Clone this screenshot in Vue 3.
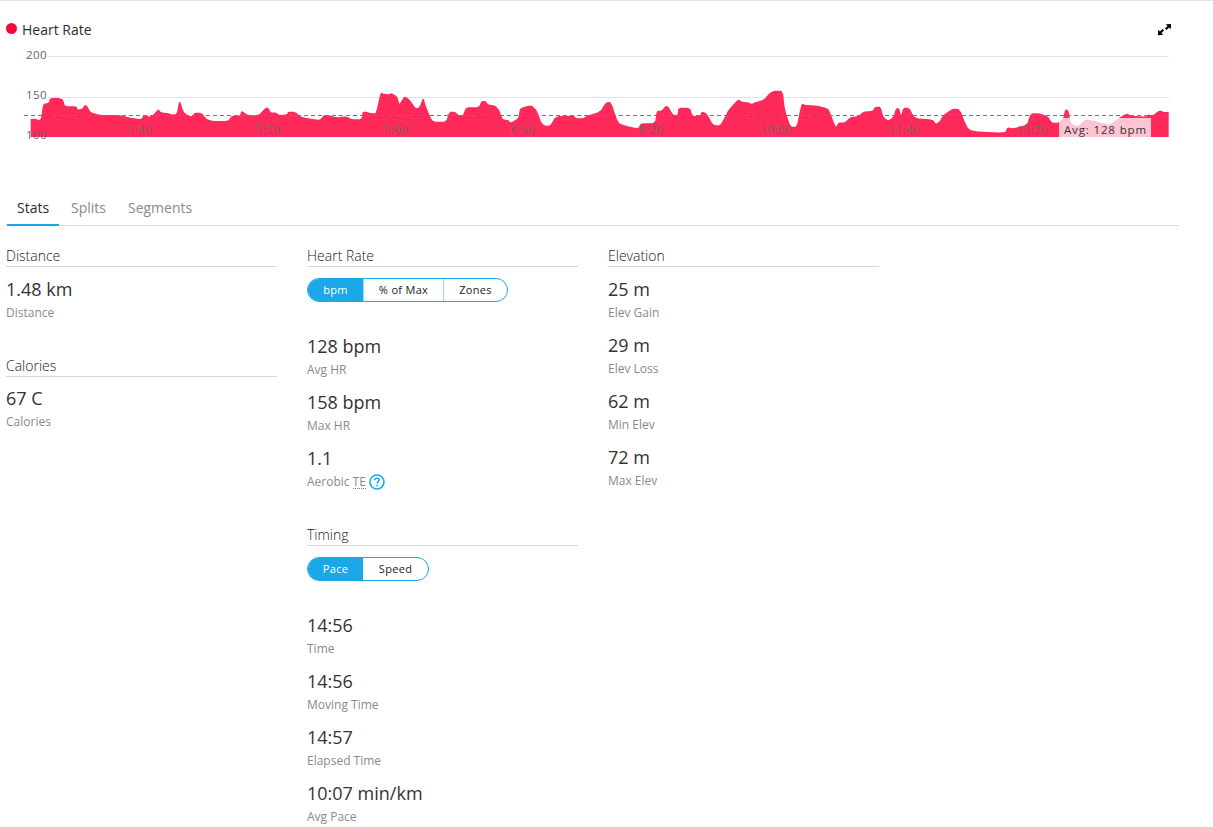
<script setup>
const bottom = 137
const seg1 = [92,357,105,356,122,362,128,320,132,311,146,309,150,294,180,294,190,300,195,319,230,319,233,329,248,326,252,316,260,316,272,337,300,345,360,345,380,351,425,358,430,345,440,345,448,351,462,342,475,327,483,337,505,339,512,343,530,343,537,305,542,308,550,335,565,347,578,349,583,338,605,338,620,358,640,363,685,363,695,347,720,347,724,332,745,346,775,346,797,323,805,323,812,337,828,338,838,345,860,343,865,335,885,335,905,352,940,357,960,360,972,345,985,345,1010,352,1040,349,1055,358,1085,358,1088,333,1118,340,1128,340,1142,277,1150,281,1168,283,1175,279,1192,290,1198,312]
const seg2 = [0,100,14,78,30,90,47,115,58,112,70,82,78,110,95,150,105,155,138,155,148,125,165,125,178,137,188,137,198,112,236,112,245,93,257,93,265,104,285,106,298,120,308,148,325,150,332,158,355,145,360,115,380,108,395,106,410,120,425,160,435,167,450,167,468,138,520,137,530,145,550,145,560,137,600,125,618,97,633,96,655,160,680,168,715,175,722,160,765,160,770,122,785,122,797,108,805,110,820,135,833,135,835,113,870,113,878,138,900,138,905,124,920,130,940,165,960,167,975,140,985,120,1015,87,1025,95,1045,97,1055,102,1070,95,1090,90,1110,68,1125,62,1148,62,1155,120,1172,170,1190,170]
const seg3 = [0,300,6,280,15,285,50,287,85,295,95,320,108,352,115,338,135,337,150,322,175,318,190,305,218,303,225,290,242,290,250,320,265,332,280,320,288,295,298,295,303,318,310,293,327,293,345,325,398,328,408,342,418,335,430,315,460,295,480,298,500,350,515,363,615,369,622,352,640,355,680,345,692,310,720,310,745,320,755,338,776,338,790,325,795,299,805,299,812,340,835,350,855,328,880,332,910,340,930,345,955,325,980,310,995,318,1040,320,1045,312,1055,318,1080,300,1090,306,1106,306]

function convert(list, ox, oy) {
  const out = []
  for (let i = 0; i < list.length; i += 2) {
    out.push([ox + list[i] / 3, oy + list[i + 1] / 3])
  }
  return out
}
function soften(pts, r) {
  const out = [pts[0]]
  for (let i = 0; i < pts.length - 1; i++) {
    const [ax, ay] = pts[i]
    const [bx, by] = pts[i + 1]
    out.push([ax + (bx - ax) * r, ay + (by - ay) * r])
    out.push([bx - (bx - ax) * r, by - (by - ay) * r])
  }
  out.push(pts[pts.length - 1])
  return out
}
const line = soften([
  ...convert(seg1, 0, 0),
  ...convert(seg2, 400, 70),
  ...convert(seg3, 800, 10)
], 0.18)
const areaPoints = [[30.7, bottom], ...line, [1168.7, bottom]]
  .map(([x, y]) => `${x.toFixed(1)},${y.toFixed(1)}`)
  .join(' ')

const xLabels = [
  { x: 140, t: '1:40' }, { x: 268, t: '3:20' }, { x: 396, t: '5:00' }, { x: 523, t: '6:40' },
  { x: 651, t: '8:20' }, { x: 776, t: '10:00' }, { x: 904, t: '11:40' }, { x: 1032, t: '13:20' }
]
const yLabels = [{ y: 59, t: '200' }, { y: 99, t: '150' }, { y: 139, t: '100' }]
const tabs = [{ t: 'Stats', active: true }, { t: 'Splits' }, { t: 'Segments' }]

const hrStats = [
  { v: '128 bpm', l: 'Avg HR' },
  { v: '158 bpm', l: 'Max HR' }
]
const timing = [
  { v: '14:56', l: 'Time' },
  { v: '14:56', l: 'Moving Time' },
  { v: '14:57', l: 'Elapsed Time' },
  { v: '10:07 min/km', l: 'Avg Pace' }
]
const elevation = [
  { v: '25 m', l: 'Elev Gain' },
  { v: '29 m', l: 'Elev Loss' },
  { v: '62 m', l: 'Min Elev' },
  { v: '72 m', l: 'Max Elev' }
]
</script>

<template>
  <div class="page">
    <section class="chart">
      <svg class="chart-svg" width="1213" height="150" viewBox="0 0 1213 150">
        <line x1="48" x2="1169" y1="56.5" y2="56.5" class="grid" />
        <line x1="48" x2="1169" y1="97.5" y2="97.5" class="grid" />
        <polygon :points="areaPoints" fill="#ff2a59" />
        <line x1="24" x2="1169" y1="115.5" y2="115.5" class="avg" />
        <text v-for="l in yLabels" :key="l.t" x="47" :y="l.y" text-anchor="end" class="axis">{{ l.t }}</text>
        <text v-for="l in xLabels" :key="l.t" :x="l.x" y="134" text-anchor="middle" class="axis over">{{ l.t }}</text>
        <rect x="1059" y="118" width="92" height="19" fill="#ffffff" fill-opacity="0.72" />
        <text x="1064" y="134" class="tip">Avg: 128 bpm</text>
        <g>
          <path d="M1165 28.5 L1167.6 25.9 L1165.8 24.2 L1171 24 L1170.8 29.2 L1169 27.4 L1166.5 30 Z" fill="#000" />
          <path d="M1164 30.5 L1161.4 33.1 L1163.2 34.8 L1158 35.2 L1158.2 29.8 L1160 31.6 L1162.5 29 Z" fill="#000" />
        </g>
      </svg>
      <div class="legend">
        <span class="dot"></span>
        <span class="legend-text">Heart Rate</span>
      </div>
    </section>

    <nav class="tabs">
      <a v-for="tab in tabs" :key="tab.t" class="tab" :class="{ active: tab.active }">{{ tab.t }}</a>
    </nav>

    <div class="columns">
      <div class="col">
        <h3 class="heading">Distance</h3>
        <div class="stat first">
          <div class="value">1.48 km</div>
          <div class="label">Distance</div>
        </div>
        <h3 class="heading gap-calories">Calories</h3>
        <div class="stat first-tight">
          <div class="value">67 C</div>
          <div class="label">Calories</div>
        </div>
      </div>

      <div class="col">
        <h3 class="heading">Heart Rate</h3>
        <div class="toggle">
          <span class="opt on w56">bpm</span>
          <span class="opt w80 divider">% of Max</span>
          <span class="opt w65 divider">Zones</span>
        </div>
        <div class="stat after-toggle">
          <div class="value">{{ hrStats[0].v }}</div>
          <div class="label">{{ hrStats[0].l }}</div>
        </div>
        <div class="stat">
          <div class="value">{{ hrStats[1].v }}</div>
          <div class="label">{{ hrStats[1].l }}</div>
        </div>
        <div class="stat">
          <div class="value">1.1</div>
          <div class="label te-row">
            Aerobic <abbr class="te">TE</abbr>
            <svg class="help" width="16" height="16" viewBox="0 0 16 16">
              <circle cx="8" cy="8" r="7" fill="none" stroke="#1ba7e8" stroke-width="1.6" />
              <path d="M5.8 6.3 C5.8 4.9 6.8 4.2 8 4.2 C9.3 4.2 10.2 5 10.2 6.1 C10.2 7.6 8 7.6 8 9.4" fill="none" stroke="#1ba7e8" stroke-width="1.5" />
              <circle cx="8" cy="11.6" r="0.95" fill="#1ba7e8" />
            </svg>
          </div>
        </div>
        <h3 class="heading gap-timing">Timing</h3>
        <div class="toggle">
          <span class="opt on w56">Pace</span>
          <span class="opt w66">Speed</span>
        </div>
        <div class="stat after-toggle">
          <div class="value">{{ timing[0].v }}</div>
          <div class="label">{{ timing[0].l }}</div>
        </div>
        <div v-for="s in timing.slice(1)" :key="s.l" class="stat">
          <div class="value">{{ s.v }}</div>
          <div class="label">{{ s.l }}</div>
        </div>
      </div>

      <div class="col">
        <h3 class="heading">Elevation</h3>
        <div class="stat first">
          <div class="value">{{ elevation[0].v }}</div>
          <div class="label">{{ elevation[0].l }}</div>
        </div>
        <div v-for="s in elevation.slice(1)" :key="s.l" class="stat">
          <div class="value">{{ s.v }}</div>
          <div class="label">{{ s.l }}</div>
        </div>
      </div>
    </div>
  </div>
</template>

<style>
html, body { margin: 0; background: #fff; overflow: hidden; }
</style>

<style scoped>
.page {
  width: 1213px;
  height: 827px;
  box-sizing: border-box;
  border-top: 1px solid #e2e2e2;
  font-family: "Open Sans", "Liberation Sans", sans-serif;
  color: #222;
  overflow: hidden;
}
.chart { position: relative; height: 149px; }
.chart-svg { display: block; margin-top: -1px; }
.grid { stroke: #e3e3e6; stroke-width: 1; }
.avg { stroke: #777; stroke-width: 1; stroke-dasharray: 4 3; }
.axis { font-size: 11.5px; fill: #666; letter-spacing: 0.4px; }
.axis.over { fill: #666; fill-opacity: 0.9; }
.tip { font-size: 11.5px; fill: #333; letter-spacing: 0.85px; }
.legend {
  position: absolute;
  left: 6px;
  top: 18px;
  display: flex;
  align-items: center;
  gap: 5px;
  font-size: 14px;
  line-height: 19px;
  color: #2b2b33;
}
.legend-text { margin-top: 2px; }
.dot { width: 11px; height: 11px; border-radius: 50%; background: #f80a38; }
.tabs {
  margin: 46px 34px 0 6px;
  display: flex;
  height: 30px;
  border-bottom: 1px solid #dcdcdc;
  font-size: 14px;
}
.tab {
  margin-right: 22px;
  line-height: 25px;
  color: #8a8a8a;
  box-sizing: border-box;
  height: 31px;
}
.tab.active {
  color: #2b2b33;
  width: 52px;
  padding-left: 10px;
  margin-left: 1px;
  margin-right: 12px;
  border-bottom: 2px solid #1ba7e8;
}
.columns {
  margin: 20px 0 0 6px;
  display: grid;
  grid-template-columns: repeat(3, 271px);
  column-gap: 30px;
  align-items: start;
}
.heading {
  margin: 0;
  font-size: 14px;
  font-weight: 300;
  line-height: 20px;
  border-bottom: 1px solid #d8d8dc;
  color: #222;
}
.gap-calories { margin-top: 23px; }
.gap-timing { margin-top: 23px; }
.stat { height: 56px; }
.stat.first { margin-top: 10px; }
.stat.first-tight { margin-top: 9px; }
.stat.after-toggle { margin-top: 32px; }
.value { font-size: 18px; font-weight: 400; line-height: 25px; color: #333; }
.label { font-size: 12px; line-height: 20px; margin-top: 1px; color: #8a8a8a; }
.te-row { display: flex; align-items: center; gap: 3px; }
.te { border-bottom: 1px dotted #777; line-height: 13px; text-decoration: none; }
.toggle {
  margin-top: 11px;
  display: inline-flex;
  height: 24px;
  box-sizing: border-box;
  border: 1px solid #1ba7e8;
  border-radius: 12px;
  overflow: hidden;
  font-size: 11px;
  vertical-align: top;
  letter-spacing: 0.3px;
}
.opt {
  display: flex;
  align-items: center;
  justify-content: center;
  box-sizing: border-box;
  padding-bottom: 2px;
  color: #222;
}
.opt.on { background: #1ba7e8; color: #fff; font-weight: 500; }
.divider { border-left: 1px solid #9fd7f2; }
.w56 { width: 55px; }
.w80 { width: 80px; }
.w65 { width: 64px; }
.w66 { width: 65px; }
</style>
